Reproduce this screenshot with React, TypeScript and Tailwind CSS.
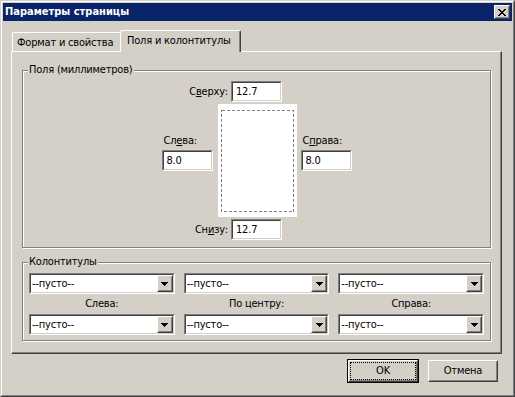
import React from 'react';

type BoxProps = { className?: string; children?: React.ReactNode };

// classic 3D edges: sunken (text fields, combos) and raised (buttons)
function Sunken({ className = '', children }: BoxProps) {
  return (
    <div className={`border border-t-[#808080] border-l-[#808080] border-r-white border-b-white ${className}`}>
      <div className="flex h-full items-center border border-t-[#404040] border-l-[#404040] border-r-[#d4d0c8] border-b-[#d4d0c8] bg-white">
        {children}
      </div>
    </div>
  );
}

function Raised({ className = '', children }: BoxProps) {
  return (
    <div className={`border border-t-white border-l-white border-r-[#404040] border-b-[#404040] bg-[#d4d0c8] ${className}`}>
      <div className="flex h-full w-full items-center justify-center border border-t-[#d4d0c8] border-l-[#d4d0c8] border-r-[#808080] border-b-[#808080]">
        {children}
      </div>
    </div>
  );
}

const CloseGlyph = () => {
  const rows = ['11000011', '01100110', '00111100', '00011000', '00111100', '01100110', '11000011'];
  return (
    <svg width="8" height="7" shapeRendering="crispEdges">
      {rows.map((r, y) =>
        r.split('').map((c, x) => (c === '1' ? <rect key={`${x}-${y}`} x={x} y={y} width="1" height="1" fill="#000" /> : null))
      )}
    </svg>
  );
};

const ArrowDown = () => (
  <svg width="7" height="4" shapeRendering="crispEdges">
    <rect x="0" y="0" width="7" height="1" fill="#000" />
    <rect x="1" y="1" width="5" height="1" fill="#000" />
    <rect x="2" y="2" width="3" height="1" fill="#000" />
    <rect x="3" y="3" width="1" height="1" fill="#000" />
  </svg>
);

function Field({ value }: { value: string }) {
  return (
    <Sunken className="h-[21px] w-[51px]">
      <span className="pl-[3px]">{value}</span>
    </Sunken>
  );
}

function Combo() {
  return (
    <Sunken className="h-[21px]">
      <span className="flex-1 pl-[1px]">--пусто--</span>
      <Raised className="h-[17px] w-[16px]">
        <ArrowDown />
      </Raised>
    </Sunken>
  );
}

function GroupBox({ title, className = '', children }: BoxProps & { title: string }) {
  return (
    <div className={`relative w-[469px] border border-[#808080] shadow-[inset_1px_1px_0_#fff,1px_1px_0_#fff] ${className}`}>
      <span className="absolute -top-[8px] left-[5px] bg-[#d4d0c8] px-[1px]">{title}</span>
      {children}
    </div>
  );
}

function Button({ label, isDefault }: { label: string; isDefault?: boolean }) {
  if (isDefault) {
    return (
      <div className="h-[24px] w-[72px] border border-black">
        <Raised className="h-full w-full">
          <div className="flex h-full w-full items-center justify-center border border-dotted border-black">{label}</div>
        </Raised>
      </div>
    );
  }
  return <Raised className="h-[22px] w-[70px]">{label}</Raised>;
}

export default function App() {
  return (
    <div className="h-[397px] w-[515px] border border-t-[#d4d0c8] border-l-[#d4d0c8] border-r-[#404040] border-b-[#404040] bg-[#d4d0c8] font-['DejaVu_Sans_Condensed','Liberation_Sans',sans-serif] text-[11px] leading-[14px] tracking-[-0.2px] text-black">
      <div className="flex h-full flex-col border border-t-white border-l-white border-r-[#808080] border-b-[#808080] p-[1px]">
        {/* title bar */}
        <div className="flex h-[18px] items-center justify-between bg-[#0a246a] px-[2px]">
          <span className="font-bold tracking-normal text-white">Параметры страницы</span>
          <Raised className="h-[14px] w-[16px]">
            <CloseGlyph />
          </Raised>
        </div>

        <div className="pl-[8px] pt-[9px]">
          {/* tabs */}
          <div className="ml-[1px] flex items-end whitespace-nowrap">
            <div className="flex h-[19px] w-[110px] items-center rounded-tl-[2px] border-t border-l border-t-white border-l-white pl-[4px] pt-[2px]">
              Формат и свойства
            </div>
            <div className="relative z-10 -mb-[1px] -ml-[2px] flex h-[22px] w-[121px] items-start rounded-t-[2px] border-t border-l border-r border-t-white border-l-white border-r-[#404040] bg-[#d4d0c8] pl-[6px] pt-[3px] shadow-[inset_-1px_0_0_#808080]">
              Поля и колонтитулы
            </div>
          </div>

          {/* tab page */}
          <div className="h-[303px] w-[491px] border border-t-white border-l-white border-r-[#404040] border-b-[#404040] pl-[10px] pt-[18px] shadow-[inset_-1px_-1px_0_#808080]">
            <GroupBox title="Поля (миллиметров)" className="h-[178px] pt-[10px]">
              <div className="grid grid-cols-[1fr_auto_1fr] items-center">
                <span className="justify-self-end pr-[3px]">
                  С<u>в</u>ерху:
                </span>
                <Field value="12.7" />
              </div>

              <div className="mt-[2px] flex justify-center">
                <div className="flex w-[51px] flex-col justify-center">
                  <span className="mb-[2px] pl-[2px]">
                    Сл<u>е</u>ва:
                  </span>
                  <Field value="8.0" />
                  <div className="h-[16px]" />
                </div>
                <div className="ml-[5px] h-[113px] w-[79px] bg-white">
                  <svg width="79" height="113" shapeRendering="crispEdges">
                    <rect x="3.5" y="6.5" width="72" height="101" fill="none" stroke="#808080" strokeDasharray="3 2" />
                  </svg>
                </div>
                <div className="ml-[4px] flex w-[51px] flex-col justify-center">
                  <span className="mb-[2px] pl-[2px]">
                    С<u>п</u>рава:
                  </span>
                  <Field value="8.0" />
                  <div className="h-[16px]" />
                </div>
              </div>

              <div className="mt-[2px] grid grid-cols-[1fr_auto_1fr] items-center">
                <span className="justify-self-end pr-[3px]">
                  Сн<u>и</u>зу:
                </span>
                <Field value="12.7" />
              </div>
            </GroupBox>

            <GroupBox title="Колонтитулы" className="mt-[14px] h-[79px] px-[6px] pt-[10px]">
              <div className="grid grid-cols-3 gap-x-[9px]">
                <Combo />
                <Combo />
                <Combo />
                <div className="flex h-[20px] items-center justify-center">Слева:</div>
                <div className="flex h-[20px] items-center justify-center">По центру:</div>
                <div className="flex h-[20px] items-center justify-center">Справа:</div>
                <Combo />
                <Combo />
                <Combo />
              </div>
            </GroupBox>
          </div>

          {/* footer buttons */}
          <div className="mt-[5px] flex items-center justify-end gap-[9px] pr-[14px]">
            <Button label="OK" isDefault />
            <Button label="Отмена" />
          </div>
        </div>
      </div>
    </div>
  );
}
